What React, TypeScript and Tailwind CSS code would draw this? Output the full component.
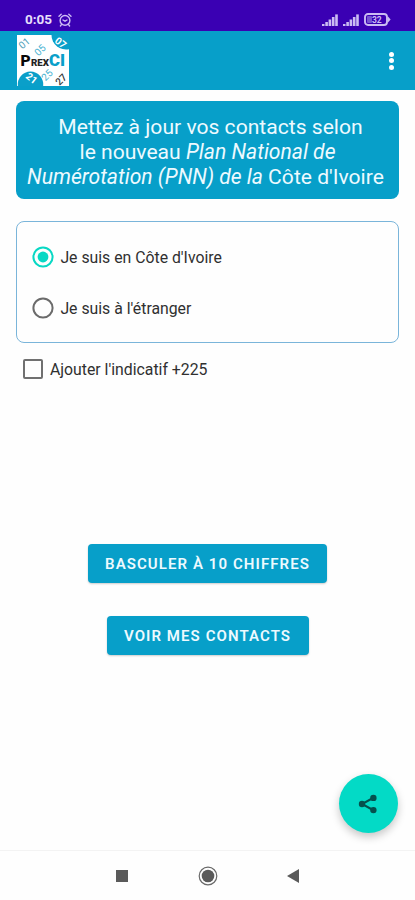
import type { ReactNode } from "react";

function AlarmIcon() {
  return (
    <svg className="w-[14px] h-[14px]" viewBox="0 0 14 14" fill="none" stroke="#cdbcf5" strokeWidth="1.4" strokeLinecap="round">
      <circle cx="7" cy="7.4" r="4.9" />
      <path d="M1 3.2 3.2 1.2M13 3.2 10.8 1.2M3.4 11.6 2.4 13M10.6 11.6l1 1.4M5 7l2 1.2L9 7" />
    </svg>
  );
}

function SignalIcon() {
  return (
    <svg className="w-4 h-3" viewBox="0 0 16 12" fill="#cbbcf3">
      <rect x="0" y="10" width="2.5" height="2" />
      <rect x="3.3" y="8" width="2.6" height="4" />
      <rect x="6.6" y="5.5" width="2.6" height="6.5" />
      <rect x="9.9" y="3" width="2.6" height="9" />
      <rect x="13.2" y="0.4" width="2.6" height="11.6" />
    </svg>
  );
}

function BatteryIcon() {
  return (
    <svg className="w-[27px] h-[13px]" viewBox="0 0 27 13">
      <rect x="1" y="1" width="22" height="11" rx="3" fill="none" stroke="#cbbcf3" strokeWidth="1.9" />
      <rect x="3" y="3" width="5" height="7" rx="1" fill="#7654d2" />
      <path d="M24 3.6 26.6 6.5 24 9.4z" fill="#cbbcf3" />
      <text x="12.8" y="9.5" fontSize="8.5" fontWeight="700" textAnchor="middle" fill="#cbbcf3">
        32
      </text>
    </svg>
  );
}

function StatusBar() {
  return (
    <div className="h-[31px] bg-[#3a00b3] flex items-center pt-[8px] pl-[25px] pr-[24px]">
      <span className="text-[13.5px] leading-none font-bold text-[#e6defb]">0:05</span>
      <div className="ml-[6px]">
        <AlarmIcon />
      </div>
      <div className="ml-auto flex items-center">
        <SignalIcon />
        <div className="ml-[5px]">
          <SignalIcon />
        </div>
        <div className="ml-[5px]">
          <BatteryIcon />
        </div>
      </div>
    </div>
  );
}

function Logo() {
  return (
    <svg className="w-[52px] h-[51px] overflow-visible" viewBox="0 0 52 51">
      <rect width="52" height="51" fill="#fff" />
      <path d="M34.5 0A14.5 14.5 0 0 0 52 14.2V0z" fill="#0a9fc9" />
      <path d="M.8 51a12.8 12.8 0 1 1 25.4 0z" fill="#0a9fc9" />
      <g fontSize="10" textAnchor="middle">
        <text transform="translate(9.5 11) rotate(-40)" fill="#4a9db8">01</text>
        <text transform="translate(25.5 17.5) rotate(-45)" fill="#48b2d1">05</text>
        <text transform="translate(41.5 10.5) rotate(38)" fill="#fff" fontWeight="700">07</text>
        <text transform="translate(12.5 46) rotate(38)" fill="#fff" fontWeight="700">21</text>
        <text transform="translate(32.5 42.5) rotate(-45)" fill="#48b2d1">25</text>
        <text transform="translate(46.5 47) rotate(-45)" fill="#333" fontWeight="500">27</text>
      </g>
      <text x="3.5" y="31" fontSize="15.5" fontWeight="900" fill="#080808">P</text>
      <text x="14" y="31" fontSize="9.5" fontWeight="900" fill="#222" textLength="18" lengthAdjust="spacingAndGlyphs">REX</text>
      <text x="32" y="31" fontSize="16.5" fontWeight="900" fill="#0a9fc9" textLength="16" lengthAdjust="spacingAndGlyphs">CI</text>
    </svg>
  );
}

function AppBar() {
  return (
    <header className="h-[59px] bg-[#079fc9] flex items-center justify-between pl-[17px] pr-[21px]">
      <Logo />
      <button aria-label="Menu" className="flex flex-col gap-[1.5px]">
        <span className="w-[5px] h-[5px] rounded-full bg-white" />
        <span className="w-[5px] h-[5px] rounded-full bg-white" />
        <span className="w-[5px] h-[5px] rounded-full bg-white" />
      </button>
    </header>
  );
}

function RadioRow({ checked = false, children }: { checked?: boolean; children: ReactNode }) {
  return (
    <label className="flex items-center h-[51px] text-[15.8px] text-[#303030]">
      <svg className="w-[22px] h-[22px] mr-[6px]" viewBox="0 0 22 22" fill="none">
        <circle cx="11" cy="11" r="9.6" stroke={checked ? "#08d8c4" : "#6b6b6b"} strokeWidth="2" />
        {checked && <circle cx="11" cy="11" r="5.4" fill="#08d8c4" />}
      </svg>
      <span className="pt-[2px]">{children}</span>
    </label>
  );
}

function NavigationBar() {
  return (
    <nav className="h-[50px] border-t border-[#f3f3f3] bg-[#fefefe] flex items-center pl-[116px]">
      <span className="w-[12px] h-[12px] bg-[#5a5a5a]" />
      <svg className="w-[20px] h-[20px] ml-[70px]" viewBox="0 0 20 20">
        <circle cx="10" cy="10" r="8.8" fill="none" stroke="#696969" strokeWidth="1.2" />
        <circle cx="10" cy="10" r="6.3" fill="#5a5a5a" />
      </svg>
      <svg className="w-[12px] h-[14px] ml-[69px]" viewBox="0 0 12 14">
        <path d="M12 0v14L0 7z" fill="#5a5a5a" />
      </svg>
    </nav>
  );
}

export default function App() {
  return (
    <div className="w-[415px] h-[900px] bg-[#fefefe] flex flex-col relative overflow-hidden font-[Roboto,sans-serif]">
      <StatusBar />
      <AppBar />
      <main className="flex-1 flex flex-col px-4 pt-[11px]">
        <h1 className="h-[98px] w-[383px] rounded-[8px] bg-[#079fc9] pt-[14px] text-center text-[21.1px] leading-[24.8px] text-[#edfaff] whitespace-nowrap">
          <span className="block pl-[6px]">Mettez à jour vos contacts selon</span>
          <span className="block">
            le nouveau <em>Plan National de</em>
          </span>
          <span className="block pr-[4px]">
            <em>Numérotation (PNN) de la</em> Côte d'Ivoire
          </span>
        </h1>

        <div className="mt-[22px] h-[122px] w-[383px] border border-[#7ab5da] rounded-[8px] pl-[15.4px] pt-[9px]">
          <RadioRow checked>Je suis en Côte d'Ivoire</RadioRow>
          <RadioRow>Je suis à l'étranger</RadioRow>
        </div>

        <label className="mt-[16px] ml-[7px] h-5 flex items-center text-[15.8px] text-[#303030]">
          <span className="w-[20px] h-[20px] mr-[7px] border-2 border-[#707070] rounded-[2px]" />
          <span className="pt-[2px]">Ajouter l'indicatif +225</span>
        </label>

        <div className="mt-[165px] flex flex-col items-center gap-[33px]">
          <button className="w-[239px] h-[39px] pt-[2px] rounded-[4px] bg-[#079fc9] text-[#edfaff] text-[15px] font-semibold tracking-[1.08px] shadow-[0_1px_2px_rgba(0,0,0,0.2)]">
            BASCULER À 10 CHIFFRES
          </button>
          <button className="w-[202px] h-[39px] pt-[2px] rounded-[4px] bg-[#079fc9] text-[#edfaff] text-[15px] font-semibold tracking-[1.08px] shadow-[0_1px_2px_rgba(0,0,0,0.2)]">
            VOIR MES CONTACTS
          </button>
        </div>
      </main>

      <button
        aria-label="Partager"
        className="absolute left-[339px] top-[774px] w-[59px] h-[59px] pr-[2px] rounded-full bg-[#03dac6] flex items-center justify-center shadow-[0_4px_8px_rgba(0,0,0,0.22)]"
      >
        <svg className="w-[20px] h-[20px]" viewBox="0 0 20 20" fill="#05504d">
          <path d="M15 4 4 10l11 6" fill="none" stroke="#05504d" strokeWidth="2" />
          <circle cx="4" cy="10" r="3.2" />
          <circle cx="15.4" cy="3.9" r="3.2" />
          <circle cx="15.4" cy="16.1" r="3.2" />
        </svg>
      </button>
      <NavigationBar />
    </div>
  );
}
